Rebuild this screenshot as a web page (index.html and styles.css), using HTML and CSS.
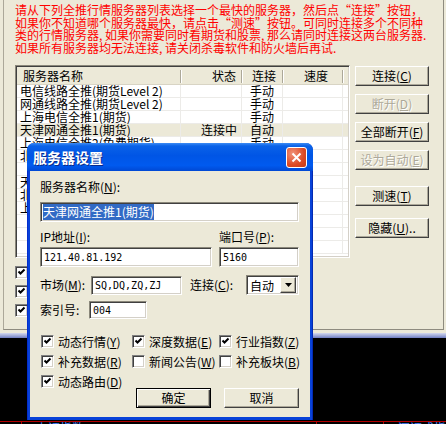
FILE: index.html
```html
<!DOCTYPE html>
<html lang="zh-CN">
<head>
    <meta charset="UTF-8">
    <title>服务器设置</title>
    <link rel="stylesheet" href="styles.css">
</head>
<body>
<div class="desk">
    <div class="window">
        <div class="panel">
            <p class="notice">请从下列全推行情服务器列表选择一个最快的服务器，然后点“连接”按钮，<br>如果你不知道哪个服务器最快，请点击“测速”按钮。可同时连接多个不同种<br>类的行情服务器, 如果你需要同时看期货和股票, 那么请同时连接这两台服务器.<br>如果所有服务器均无法连接, 请关闭杀毒软件和防火墙后再试.</p>

            <div class="servers">
                <div class="list">
                    <div class="row head">
                        <span>服务器名称</span><span class="r">状态</span><span class="c">连接</span><span class="r sp">速度</span><span></span>
                    </div>
                    <div class="row"><span>电信线路全推(期货Level 2)</span><span class="r"></span><span class="c">手动</span><span></span><span></span></div>
                    <div class="row"><span>网通线路全推(期货Level 2)</span><span class="r"></span><span class="c">手动</span><span></span><span></span></div>
                    <div class="row"><span>上海电信全推1(期货)</span><span class="r"></span><span class="c">手动</span><span></span><span></span></div>
                    <div class="row on"><span>天津网通全推1(期货)</span><span class="r">连接中</span><span class="c">自动</span><span></span><span></span></div>
                    <div class="row"><span>上海电信全推2(免费期货)</span><span class="r"></span><span class="c">手动</span><span></span><span></span></div>
                    <div class="row"><span>北京网通全推1(期货)</span><span class="r"></span><span class="c">手动</span><span></span><span></span></div>
                    <div class="row"><span></span><span class="r"></span><span class="c"></span><span></span><span></span></div>
                    <div class="row"><span>天津电信全推1(期货)</span><span class="r"></span><span class="c">手动</span><span></span><span></span></div>
                    <div class="row"><span>北京电信全推1(期货)</span><span class="r"></span><span class="c">手动</span><span></span><span></span></div>
                    <div class="row"><span>上海网通全推1(期货)</span><span class="r"></span><span class="c">手动</span><span></span><span></span></div>
                    <div class="row"><span></span><span></span><span></span><span></span><span></span></div>
                    <div class="row"><span></span><span></span><span></span><span></span><span></span></div>
                    <div class="row"><span></span><span></span><span></span><span></span><span></span></div>
                </div>

                <div class="actions">
                    <button class="btn">连接(<u>C</u>)</button>
                    <button class="btn" disabled>断开(<u>D</u>)</button>
                    <button class="btn">全部断开(<u>F</u>)</button>
                    <button class="btn" disabled>设为自动(<u>E</u>)</button>
                    <button class="btn gap-lg">测速(<u>T</u>)</button>
                    <button class="btn gap-md">隐藏(<u>U</u>)..</button>
                </div>
            </div>

            <div class="opts">
                <label class="chk"><span class="cb"><svg width="9" height="9" viewBox="0 0 9 9"><path d="M1.5 3.5 L3.5 5.5 L7.5 1.5" fill="none" stroke="#000" stroke-width="2"/></svg></span><span>启动时自动连接</span></label>
                <label class="chk"><span class="cb"><svg width="9" height="9" viewBox="0 0 9 9"><path d="M1.5 3.5 L3.5 5.5 L7.5 1.5" fill="none" stroke="#000" stroke-width="2"/></svg></span><span>断线后自动重连</span></label>
                <label class="chk"><span class="cb"><svg width="9" height="9" viewBox="0 0 9 9"><path d="M1.5 3.5 L3.5 5.5 L7.5 1.5" fill="none" stroke="#000" stroke-width="2"/></svg></span><span>连接成功后隐藏</span></label>
            </div>
        </div>
    </div>
    <div class="strip"></div>
    <div class="chart">
        <div class="ticker">
            <span class="cell c0"></span>
            <span class="cell c1"><i class="blue s1">上证指数</i><i class="cyan s2">2345</i><i class="cyan s3">12.34%</i></span>
            <span class="cell c2"><i class="cyan s4">1234</i></span>
            <span class="cell c3"><i class="blue s5">深证成指</i></span>
        </div>
    </div>

    <div class="dialog">
        <div class="title">
            <span>服务器设置</span>
            <span class="close"><svg width="11" height="11" viewBox="0 0 11 11"><path d="M1.5 1.5 L9.5 9.5 M9.5 1.5 L1.5 9.5" stroke="#fff" stroke-width="2"/></svg></span>
        </div>
        <div class="dlg-body">
            <div class="lbl">服务器名称(<u>N</u>):</div>
            <div class="tb name"><span class="sel">天津网通全推1(期货)</span></div>

            <div class="pair">
                <div class="field">
                    <div class="lbl">IP地址(<u>I</u>):</div>
                    <div class="tb mono">121.40.81.192</div>
                </div>
                <div class="field">
                    <div class="lbl">端口号(<u>P</u>):</div>
                    <div class="tb mono">5160</div>
                </div>
            </div>

            <div class="line">
                <span class="lbl w-mkt">市场(<u>M</u>):</span>
                <div class="tb mono market">SQ,DQ,ZQ,ZJ</div>
                <span class="lbl conn">连接(<u>C</u>):</span>
                <div class="tb dd"><span>自动</span><span class="arrow"><svg width="7" height="4" viewBox="0 0 7 4"><path d="M0 0 H7 L3.5 4 Z" fill="#000"/></svg></span></div>
            </div>

            <div class="line idx">
                <span class="lbl w-idx">索引号:</span>
                <div class="tb mono index">004</div>
            </div>

            <div class="checks">
                <label class="chk"><span class="cb"><svg width="9" height="9" viewBox="0 0 9 9"><path d="M1.5 3.5 L3.5 5.5 L7.5 1.5" fill="none" stroke="#000" stroke-width="2"/></svg></span><span>动态行情(<u>Y</u>)</span></label>
                <label class="chk"><span class="cb"><svg width="9" height="9" viewBox="0 0 9 9"><path d="M1.5 3.5 L3.5 5.5 L7.5 1.5" fill="none" stroke="#000" stroke-width="2"/></svg></span><span>深度数据(<u>E</u>)</span></label>
                <label class="chk"><span class="cb"><svg width="9" height="9" viewBox="0 0 9 9"><path d="M1.5 3.5 L3.5 5.5 L7.5 1.5" fill="none" stroke="#000" stroke-width="2"/></svg></span><span>行业指数(<u>Z</u>)</span></label>
                <label class="chk"><span class="cb"><svg width="9" height="9" viewBox="0 0 9 9"><path d="M1.5 3.5 L3.5 5.5 L7.5 1.5" fill="none" stroke="#000" stroke-width="2"/></svg></span><span>补充数据(<u>R</u>)</span></label>
                <label class="chk"><span class="cb"></span><span>新闻公告(<u>W</u>)</span></label>
                <label class="chk"><span class="cb"></span><span>补充板块(<u>B</u>)</span></label>
                <label class="chk"><span class="cb"><svg width="9" height="9" viewBox="0 0 9 9"><path d="M1.5 3.5 L3.5 5.5 L7.5 1.5" fill="none" stroke="#000" stroke-width="2"/></svg></span><span>动态路由(<u>D</u>)</span></label>
            </div>

            <div class="dlg-btns">
                <button class="btn default">确定</button>
                <button class="btn">取消</button>
            </div>
        </div>
    </div>
</div>
</body>
</html>
```

FILE: styles.css
```css
* {
    padding: 0;
    margin: 0;
    box-sizing: border-box;
}
body {
    width: 446px;
    height: 424px;
    overflow: hidden;
    background-color: #000;
    font-family: "Noto Sans CJK SC", "Liberation Sans", sans-serif;
    font-size: 12px;
    color: #000;
}
u {
    text-decoration: underline;
}
.desk {
    position: relative;
    width: 446px;
    height: 424px;
    display: flex;
    flex-direction: column;
}

/* main window */
.window {
    background-color: #ECE9D8;
    padding: 0 2px 3px 3px;
}
.panel {
    height: 330px;
    border-left: 1px solid #aca899;
    border-right: 1px solid #8e8b7f;
    border-bottom: 1px solid #8e8b7f;
    padding: 4px 0 0 11px;
}
.notice {
    color: #ff0000;
    line-height: 12.5px;
    white-space: nowrap;
}
.servers {
    display: flex;
    gap: 5px;
    margin-top: 11px;
}
.list {
    width: 335px;
    height: 193px;
    overflow: hidden;
    background-color: #fff;
    border: 1px solid;
    border-color: #8a877a #fff #fff #8a877a;
    box-shadow: inset 1px 1px #404040, inset -1px -1px #d4d0c8;
    padding: 1px;
}
.row {
    display: grid;
    grid-template-columns: 164px 61px 41px 60px 1fr;
    height: 13px;
    line-height: 12px;
    border-bottom: 1px solid #ecebe8;
}
.row span {
    padding: 0 3px;
    white-space: nowrap;
    border-right: 1px solid #ecebe8;
}
.row .r {
    text-align: right;
    padding-right: 4px;
}
.row .c {
    text-align: center;
}
.row.on {
    background-color: #ECE9D8;
}
.row.head {
    height: 18px;
    line-height: 18px;
    background-color: #ECE9D8;
    border-bottom: 1px solid #d8d4c4;
}
.row.head span {
    position: relative;
    border-right: none;
    padding-left: 6px;
}
.row.head span::after {
    content: "";
    position: absolute;
    right: 0;
    top: 3px;
    bottom: 2px;
    width: 1px;
    background-color: #aca899;
    box-shadow: 1px 0 #fff;
}
.row.head span:last-child::after {
    display: none;
}
.row.head .r {
    padding-right: 6px;
}
.row.head .sp {
    padding-right: 15px;
}

.actions {
    width: 74px;
    display: flex;
    flex-direction: column;
    gap: 8px;
    padding-top: 1px;
}
.btn {
    height: 20px;
    font-family: "Noto Sans CJK SC", "Liberation Sans", sans-serif;
    font-size: 12px;
    line-height: 16px;
    color: #000;
    background-color: #ECE9D8;
    border: 1px solid;
    border-color: #fff #404040 #404040 #fff;
    box-shadow: inset -1px -1px #aca899;
    white-space: nowrap;
}
.btn:disabled {
    color: #aca899;
    text-shadow: 1px 1px #fff;
}
.gap-lg {
    margin-top: 8px;
}
.gap-md {
    margin-top: 4px;
}

.opts {
    margin-top: 8px;
    display: flex;
    flex-direction: column;
    gap: 6px;
}
.chk {
    display: flex;
    align-items: center;
    gap: 4px;
    height: 13px;
    line-height: 13px;
    white-space: nowrap;
}
.cb {
    width: 13px;
    height: 13px;
    flex: none;
    display: flex;
    align-items: center;
    justify-content: center;
    background-color: #fff;
    border: 1px solid;
    border-color: #808080 #fff #fff #808080;
    box-shadow: inset 1px 1px #404040, inset -1px -1px #d4d0c8;
}

/* screen below the window */
.strip {
    height: 5px;
    background-image: linear-gradient(#d3d8ee, #9aa4d4 60%, #6e7cc0);
}
.chart {
    flex: 1;
    display: flex;
    flex-direction: column;
    justify-content: flex-end;
}
.ticker {
    height: 3px;
    border-top: 1px solid #b40000;
    display: flex;
    overflow: hidden;
    line-height: 12px;
}
.cell {
    height: 12px;
    border-left: 1px solid #b40000;
}
.c0 {
    width: 21px;
    border-left: none;
}
.c1 {
    width: 295px;
}
.c2 {
    width: 67px;
}
.c3 {
    flex: 1;
}
.cell i {
    font-style: normal;
}
.blue {
    color: #4a82ff;
}
.cyan {
    color: #44e4e4;
}
.s1 { margin-left: 14px; }
.s2 { margin-left: 22px; }
.s3 { margin-left: 36px; }
.s4 { margin-left: 27px; }
.s5 { margin-left: 14px; }

/* dialog window */
.dialog {
    position: absolute;
    left: 27px;
    top: 143px;
    width: 286px;
    height: 277px;
    display: flex;
    flex-direction: column;
    padding: 0 3px 3px;
    border-radius: 7px 7px 0 0;
    background-image: linear-gradient(to right, #0019c4, #0842d8 1px, #0842d8 calc(100% - 1px), #00138c);
}
.title {
    height: 28px;
    margin: 0 -3px;
    padding: 0 6px;
    display: flex;
    align-items: center;
    justify-content: space-between;
    border-radius: 7px 7px 0 0;
    background-image: linear-gradient(#3d8cf4 0, #0a62e8 3px, #0055e5 45%, #005aef 80%, #0048d4 100%);
    color: #fff;
    font-size: 14px;
    font-weight: bold;
    text-shadow: 1px 1px #0a2a8a;
}
.close {
    width: 21px;
    height: 21px;
    display: flex;
    align-items: center;
    justify-content: center;
    border: 1px solid #fff;
    border-radius: 3px;
    background-image: radial-gradient(circle at 30% 30%, #f0937a, #de4a24 60%, #c23a16);
}
.dlg-body {
    flex: 1;
    background-color: #ECE9D8;
    padding: 9px 11px 0 10px;
}
.lbl {
    line-height: 14px;
    white-space: nowrap;
}
.tb {
    height: 20px;
    display: flex;
    align-items: center;
    padding: 0 2px;
    background-color: #fff;
    border: 1px solid;
    border-color: #8a877a #fff #fff #8a877a;
    box-shadow: inset 1px 1px #404040, inset -1px -1px #d4d0c8;
    white-space: nowrap;
}
.mono {
    font-family: "DejaVu Sans Mono", monospace;
    font-size: 10px;
    padding-left: 3px;
}
.name {
    margin-top: 8px;
}
.sel {
    background-color: #316ac5;
    color: #fff;
    line-height: 16px;
}
.pair {
    display: grid;
    grid-template-columns: 172px 1fr;
    column-gap: 7px;
    margin-top: 8px;
}
.field {
    display: flex;
    flex-direction: column;
    gap: 3px;
}
.line {
    display: flex;
    align-items: center;
    margin-top: 8px;
}
.w-mkt {
    width: 51px;
}
.market {
    width: 91px;
    height: 19px;
}
.conn {
    margin-left: 8px;
}
.dd {
    width: 53px;
    margin-left: auto;
    padding: 0 2px 0 3px;
    justify-content: space-between;
}
.arrow {
    width: 16px;
    height: 16px;
    display: flex;
    align-items: center;
    justify-content: center;
    background-color: #ECE9D8;
    border: 1px solid;
    border-color: #fff #404040 #404040 #fff;
    box-shadow: inset -1px -1px #aca899;
}
.idx {
    margin-top: 6px;
}
.w-idx {
    width: 49px;
}
.index {
    width: 58px;
    height: 18px;
}
.checks {
    display: grid;
    grid-template-columns: 91px 87px auto;
    row-gap: 7px;
    margin-top: 16px;
}
.checks .chk {
    padding-left: 1px;
}
.dlg-btns {
    display: flex;
    justify-content: flex-end;
    gap: 13px;
}
.dlg-btns .btn {
    width: 75px;
}
.btn.default {
    border-color: #000;
    box-shadow: inset 1px 1px #fff, inset -1px -1px #404040, inset -2px -2px #aca899;
}
```
